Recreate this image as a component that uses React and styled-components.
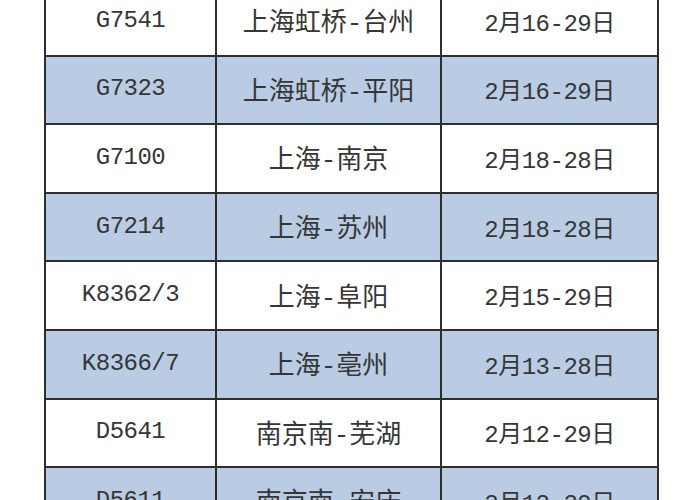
import React from "react";
import styled, { createGlobalStyle } from "styled-components";

const GlobalStyle = createGlobalStyle`
  html, body {
    margin: 0;
    padding: 0;
    background: #ffffff;
    overflow: hidden;
  }
`;

const trains = [
  { code: "G7541", route: "上海虹桥-台州", dates: "2月16-29日" },
  { code: "G7323", route: "上海虹桥-平阳", dates: "2月16-29日" },
  { code: "G7100", route: "上海-南京", dates: "2月18-28日" },
  { code: "G7214", route: "上海-苏州", dates: "2月18-28日" },
  { code: "K8362/3", route: "上海-阜阳", dates: "2月15-29日" },
  { code: "K8366/7", route: "上海-亳州", dates: "2月13-28日" },
  { code: "D5641", route: "南京南-芜湖", dates: "2月12-29日" },
  { code: "D5611", route: "南京南-安庆", dates: "2月12-29日" },
];

const Page = styled.div`
  width: 700px;
  height: 500px;
  overflow: hidden;
  background: #ffffff;
`;

const Table = styled.div`
  margin: -12px 0 0 44px;
  width: 611px;
  display: grid;
  grid-template-columns: 169px 225px 1fr;
  border-left: 2px solid #2e2e2e;
  border-right: 2px solid #2e2e2e;
`;

const Cell = styled.div`
  height: 68.6px;
  display: flex;
  align-items: center;
  justify-content: center;
  padding-bottom: 2px;
  box-sizing: border-box;
  background: ${({ shaded }) => (shaded ? "#b9cce4" : "#ffffff")};
  border-bottom: 2.5px solid #2e2e2e;
  border-left: ${({ first }) => (first ? "none" : "2px solid #2e2e2e")};
  color: #363636;
  font-family: "Liberation Mono", "Noto Sans CJK SC", monospace;
  font-size: ${({ size }) => size || 24}px;
  letter-spacing: ${({ size }) => (size ? "0" : "-0.5px")};
`;

export default function App() {
  return (
    <Page>
      <GlobalStyle />
      <Table>
        {trains.map((t, i) => (
          <React.Fragment key={t.code}>
            <Cell first shaded={i % 2 === 1}>
              {t.code}
            </Cell>
            <Cell size={26} shaded={i % 2 === 1}>
              {t.route}
            </Cell>
            <Cell shaded={i % 2 === 1}>{t.dates}</Cell>
          </React.Fragment>
        ))}
      </Table>
    </Page>
  );
}
